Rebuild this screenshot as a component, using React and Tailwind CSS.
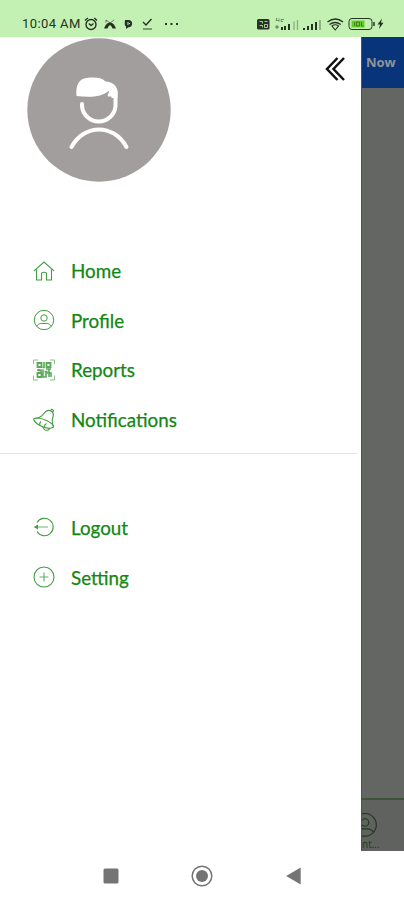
import React from 'react';

const HomeIcon = () => (
  <svg viewBox="0 0 24 24" className="w-6 h-6 opacity-80" fill="none" stroke="currentColor" strokeWidth="1.100">
    <path d="M2.300 11.700 12 3.100l9.700 8.600" strokeLinecap="round" />
    <path d="M4.500 10.300V21h5v-6.200q0-1.500 2.500-1.500t2.500 1.500V21h5V10.300" />
  </svg>
);

const ProfileIcon = ({ className = 'w-6 h-6 opacity-80' }) => (
  <svg viewBox="0 0 24 24" className={className} fill="none" stroke="currentColor" strokeWidth="1">
    <circle cx="12" cy="11" r="9.7" />
    <circle cx="12" cy="9" r="3.2" />
    <path d="M4.800 17.300c2.200-3.700 4.500-2.800 7.200-2.800s5-.9 7.200 2.800" />
  </svg>
);

const ReportsIcon = () => (
  <svg viewBox="0 0 24 24" className="w-6 h-6 opacity-70" fill="none" stroke="currentColor" strokeWidth="1">
    <path d="M1.500 6V2H6M18 2h4.500v4M1.500 17.500V22H6M18 22h4.500v-4.500" opacity=".7" />
    <path d="M5.500 5h4v4h-4zM14.500 5h4v4h-4zM5.500 15h4v4h-4z" strokeWidth="1.800" />
    <path d="M12 4v5.500h-1.500M5 12h4v2.500m2-3v7.500h3v-4h5v4m-5-8h5m-6.500 2.500h3M7 11v2.500M17 11v8" strokeWidth="1.600" />
  </svg>
);

const BellIcon = () => (
  <svg viewBox="0 0 24 24" className="w-6 h-6 opacity-80" fill="none" stroke="currentColor" strokeWidth="1.100" strokeLinejoin="round">
    <path d="M2 10.500c4.500-.2 7.500-1.800 9.500-4.500 2-2.800 4.500-4.300 7-3.300 2.800 1.300 3.300 4 2.300 6.800-1 3.200-.8 6 .7 9.500" />
    <path d="M2 10.500c-.8 1.500 1.500 4.500 6 7s10 4 13.500 1.500c.5-1.500-2.500-4.500-7-6.500S5 9.500 2 10.500z" />
    <path d="M9 13.500c-1.500 1.500-1.500 3.200-.7 4.300M14.500 15.500c-1.500.8-2.300 2.500-2 4.200M11 19c.5 2.300 2.500 3.500 4.500 3.200 1.200-.2 2-1 2-2M18.500 2.700l1-1.500 2 1-.5 2" />
  </svg>
);

const LogoutIcon = () => (
  <svg viewBox="0 0 24 24" className="w-6 h-6 opacity-80" fill="none" stroke="currentColor" strokeWidth="1.100">
    <path d="M5 6.500a8.700 8.700 0 1 1 0 9" />
    <path d="M5 11h11" opacity=".7" />
    <path d="M2.800 11 5.500 9.500v3z" fill="currentColor" />
  </svg>
);

const SettingIcon = () => (
  <svg viewBox="0 0 24 24" className="w-6 h-6 opacity-80" fill="none" stroke="currentColor" strokeWidth="1.100">
    <circle cx="12" cy="11" r="10" />
    <path d="M12 6.500v9M7.500 11h9" opacity=".8" />
  </svg>
);

const mainItems = [
  { label: 'Home', Icon: HomeIcon },
  { label: 'Profile', Icon: ProfileIcon },
  { label: 'Reports', Icon: ReportsIcon },
  { label: 'Notifications', Icon: BellIcon },
];

const accountItems = [
  { label: 'Logout', Icon: LogoutIcon },
  { label: 'Setting', Icon: SettingIcon },
];

const MenuList = ({ items }) => (
  <ul>
    {items.map(({ label, Icon }) => (
      <li key={label} className="h-[49.5px] flex items-center pl-8 text-[#128712]">
        <Icon />
        <span className="ml-[15px] font-['Lato',sans-serif] text-[18.8px] [-webkit-text-stroke:0.25px_currentColor]">
          {label}
        </span>
      </li>
    ))}
  </ul>
);

const StatusBar = () => (
  <div className="h-[37px] shrink-0 bg-[#c3f1b3] flex items-start pt-4 pl-[22px] text-[#263322]">
    <span className="w-[61px] whitespace-nowrap font-['Roboto',sans-serif] text-[13px] leading-4 tracking-[0.4px]">10:04 AM</span>
    <svg viewBox="0 0 100 16" className="w-[100px] h-4" fill="none" stroke="currentColor" strokeWidth="1.4">
      <circle cx="8" cy="8.500" r="5" />
      <path d="M2 4.500 4.800 2M14 4.500 11.200 2M5.800 7.500 8 9.500l2.500-2" />
      <path d="m23 4 4 3 4-3M23 4v2.500" strokeWidth="1" opacity=".6" />
      <path d="M21 12.500q2-6 6-6t6 6h-3.500l-1.500-3h-2l-1.500 3z" fill="currentColor" stroke="none" />
      <path d="M42 4h3.500a3.600 3.600 0 1 1 0 7.200L43 13v-2.500q-2-1-1-6.500z" fill="currentColor" stroke="none" />
      <path d="M45 6v3M46 7.500h1" stroke="#c3f1b3" strokeWidth="1" />
      <path d="m60 6 3 3 5.500-6" />
      <path d="M60 13h9" strokeWidth="1.500" opacity=".6" />
      <path d="M82 8h2M87.500 8h2M93 8h2" strokeWidth="2" />
    </svg>
    <svg viewBox="0 0 130 16" className="w-[130px] h-4 ml-[73px]" fill="none" stroke="currentColor" strokeWidth="1.300">
      <rect x="1" y="3" width="12.500" height="10.500" rx="1.500" fill="currentColor" stroke="none" />
      <path d="M3.500 5.500h3v2m2-2h3M3.500 9.500h3v2m2-3h3v3h-3z" stroke="#c3f1b3" strokeWidth=".8" />
      <path d="M20 2.500h1l-1 2h3m0-2v3M25 3.500h3m-3 0v2h2" strokeWidth=".8" opacity=".6" />
      <path d="M19 11h4m-2-2v4" strokeWidth="1" opacity=".6" />
      <path d="M26 14v-3M29 14v-4M33 14V8" strokeWidth="2" />
      <path d="M38 14V5.500M41.500 14V4" strokeWidth="1.300" opacity=".35" />
      <path d="M48 14v-2M52 14v-4M56 14V8M60 14V6" strokeWidth="2" />
      <path d="M64 14V4" strokeWidth="1.300" opacity=".5" />
      <path d="M71.500 6q8-6 15.500 0M73.500 8.500q5.500-4 11.200 0" strokeWidth="1.400" />
      <path d="M76 10q3.200-2.500 6.500 0L79.200 14z" strokeWidth="1.100" />
      <rect x="93" y="2.500" width="23" height="11" rx="3" strokeWidth="1" />
      <path d="M95.500 4.500h13v7h-13z" fill="#63ce25" stroke="none" />
      <path d="M98.500 6v4m2-4v4h3V6h-3m5 0v4h2" strokeWidth=".8" opacity=".6" />
      <path d="M118 6v4" strokeWidth="1.500" />
      <path d="m126 2.500-4.500 6h2.500l-1 4.500 4.500-6.200h-2.500z" fill="currentColor" stroke="none" />
    </svg>
  </div>
);

const Avatar = () => (
  <svg viewBox="0 0 144 144" className="w-36 h-36" fill="none" stroke="white">
    <circle cx="72" cy="72" r="71.700" fill="#a29e9d" stroke="none" />
    <path d="M49.500 58c-1-12 3-17 10-18 8-.8 15-.8 19 3.500 7.500.5 12 5 12 10v6.500h-6v-1.500h-3.500c-1-1.500 1-3 1.300-6-8 7-20 7-32.800 5.500z" fill="white" stroke="none" />
    <path d="M55 66v2a16.800 16.800 0 0 0 33.500 0V54" strokeWidth="4" strokeLinecap="round" />
    <path d="M44.500 109c13-23.500 42-23.500 55 0" strokeWidth="4" strokeLinecap="round" />
  </svg>
);

const Drawer = () => (
  <aside className="w-[361px] shrink-0 bg-white">
    <div className="h-[209.5px] flex justify-between items-start pl-[27px] pt-px pr-[15px]">
      <Avatar />
      <svg viewBox="0 0 22 26" className="w-[22px] h-[26px] mt-[18px]" fill="none" stroke="#111" strokeWidth="2.500">
        <path d="M13.500 2 3 13l10.500 11M20 2 9.500 13 20 24" />
      </svg>
    </div>
    <MenuList items={mainItems} />
    <div className="h-px mt-[8px] mr-1 bg-[#e3e3e3]" />
    <div className="pt-[50px]">
      <MenuList items={accountItems} />
    </div>
  </aside>
);

const DimmedPage = () => (
  <div className="flex-1 flex flex-col bg-[#646663] border-l border-[#505250]">
    <div className="h-[51px] shrink-0 bg-[#08347a] flex items-center pl-1 font-['Open_Sans',sans-serif] text-[13px] font-bold text-[#8f949b]">
      Now
    </div>
    <div className="flex-1" />
    <div className="h-[53px] shrink-0 border-t-2 border-[#3f5539] bg-[#606260] text-[#1f3a1c]">
      <div className="h-[39px] pt-3 overflow-hidden">
        <ProfileIcon className="w-7 h-7 -ml-[11px]" />
      </div>
      <span className="block font-['Open_Sans',sans-serif] text-[10px] leading-[10px] whitespace-nowrap">nt...</span>
    </div>
  </div>
);

const NavigationBar = () => (
  <div className="h-[49px] shrink-0 bg-white flex items-center justify-center gap-[72px] text-[#747474]">
    <svg viewBox="0 0 16 16" className="w-4 h-4" fill="currentColor">
      <rect x=".5" y=".5" width="15" height="15" rx="1.500" />
    </svg>
    <svg viewBox="0 0 22 22" className="w-[22px] h-[22px]" fill="none" stroke="currentColor" strokeWidth="1.500">
      <circle cx="11" cy="11" r="9.800" />
      <circle cx="11" cy="11" r="6" fill="currentColor" stroke="none" />
    </svg>
    <svg viewBox="0 0 16 18" className="w-4 h-[18px]" fill="currentColor">
      <path d="M1.200 9 15.700.5v17z" />
    </svg>
  </div>
);

export default function App() {
  return (
    <div className="w-[404px] h-[900px] flex flex-col overflow-hidden bg-white">
      <StatusBar />
      <div className="h-[814px] shrink-0 flex">
        <Drawer />
        <DimmedPage />
      </div>
      <NavigationBar />
    </div>
  );
}
